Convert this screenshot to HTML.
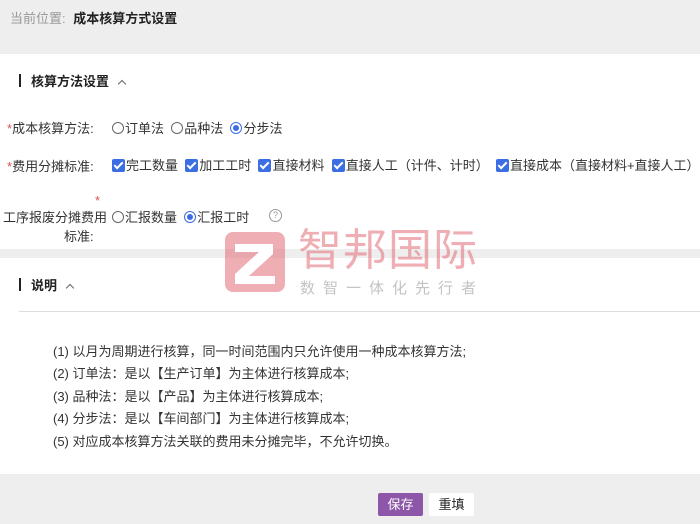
<!DOCTYPE html>
<html><head><meta charset="utf-8"><style>
*{margin:0;padding:0;box-sizing:border-box}
body{width:700px;height:524px;position:relative;overflow:hidden;background:#fff;font-family:"Liberation Sans","Noto Sans CJK SC",sans-serif;font-size:13px;color:#333}
.a{position:absolute;white-space:nowrap}
.star{color:#d9534f}
.rd{display:inline-block;width:12px;height:12px;border:1px solid #666;border-radius:50%;vertical-align:-1px;margin-right:1px;position:relative}
.rd.on{border-color:#3b6de3}
.rd.on:after{content:"";position:absolute;left:2px;top:2px;width:6px;height:6px;border-radius:50%;background:#3b6de3}
.cb{display:inline-block;width:13px;height:13px;background:#3b6de3;border-radius:2px;vertical-align:-2px;margin-right:1px;position:relative}
.cb:after{content:"";position:absolute;left:4px;top:1px;width:3px;height:7px;border:solid #fff;border-width:0 2px 2px 0;transform:rotate(45deg)}
.hd{font-weight:bold;font-size:13px;color:#222}
.bar{position:absolute;width:2px;height:13px;background:#222}
.car{display:inline-block;width:6px;height:6px;border-left:1.3px solid #666;border-top:1.3px solid #666;transform:rotate(45deg);margin-left:10px;vertical-align:-1px}
.li{position:absolute;left:53px;font-size:13px;color:#333}
</style></head><body>
<div class="a" style="left:0;top:0;width:700px;height:54px;background:#eeeeee"></div>
<div class="a" style="left:10px;top:8px;font-size:13px;color:#999">当前位置: <b style="color:#222;margin-left:4px">成本核算方式设置</b></div>

<div class="bar" style="left:19px;top:74px"></div>
<div class="a hd" style="left:31px;top:71px">核算方法设置<span class="car"></span></div>

<div class="a" style="left:7px;top:118px"><span class="star">*</span>成本核算方法:</div>
<div class="a" style="left:112px;top:118px"><span class="rd"></span>订单法 &nbsp;<span class="rd"></span>品种法 &nbsp;<span class="rd on"></span>分步法</div>

<div class="a" style="left:7px;top:156px"><span class="star">*</span>费用分摊标准:</div>
<div class="a" style="left:112px;top:155px"><span class="cb"></span>完工数量 &nbsp;<span class="cb"></span>加工工时 &nbsp;<span class="cb"></span>直接材料 &nbsp;<span class="cb"></span>直接人工（计件、计时） &nbsp;<span class="cb"></span>直接成本（直接材料+直接人工）</div>

<div class="a star" style="left:95px;top:193px">*</div>
<div class="a" style="left:3px;top:207px">工序报废分摊费用</div>
<div class="a" style="left:64px;top:226px">标准:</div>
<div class="a" style="left:112px;top:207px"><span class="rd"></span>汇报数量 &nbsp;<span class="rd on"></span>汇报工时</div>
<div class="a" style="left:269px;top:209px;width:13px;height:13px;border:1px solid #999;border-radius:50%;font-size:9px;color:#999;text-align:center;line-height:11px">?</div>

<div class="a" style="left:0;top:249px;width:700px;height:9px;background:#eeeeee"></div>

<div class="bar" style="left:19px;top:278px"></div>
<div class="a hd" style="left:31px;top:275px">说明<span class="car"></span></div>
<div class="a" style="left:19px;top:311px;width:681px;height:1px;background:#ddd"></div>

<div class="li" style="top:341px">(1) 以月为周期进行核算，同一时间范围内只允许使用一种成本核算方法;</div>
<div class="li" style="top:363px">(2) 订单法：是以【生产订单】为主体进行核算成本;</div>
<div class="li" style="top:386px">(3) 品种法：是以【产品】为主体进行核算成本;</div>
<div class="li" style="top:408px">(4) 分步法：是以【车间部门】为主体进行核算成本;</div>
<div class="li" style="top:431px">(5) 对应成本核算方法关联的费用未分摊完毕，不允许切换。</div>

<div class="a" style="left:0;top:474px;width:700px;height:50px;background:#eeeeee"></div>
<div class="a" style="left:378px;top:493px;width:45px;height:23px;background:#8e56a8;color:#fff;border-radius:2px;text-align:center;line-height:23px;font-size:13px">保存</div>
<div class="a" style="left:429px;top:493px;width:45px;height:23px;background:#fff;color:#222;border-radius:2px;text-align:center;line-height:23px;font-size:13px">重填</div>

<div class="a" style="left:225px;top:232px;width:60px;height:60px;background:rgba(228,120,128,0.6);border-radius:8px"></div>
<svg class="a" style="left:225px;top:232px" width="60" height="60"><path d="M10 12 H48 V22 L24 44 H50 V52 H10 V42 L34 20 H10 Z" fill="#fff"/></svg>
<div class="a" style="left:298px;top:226px;font-size:44px;line-height:50px;color:rgba(228,120,128,0.6);letter-spacing:1px">智邦国际</div>
<div class="a" style="left:300px;top:277px;font-size:15px;color:rgba(170,170,170,0.7);letter-spacing:8px">数智一体化先行者</div>
</body></html>
